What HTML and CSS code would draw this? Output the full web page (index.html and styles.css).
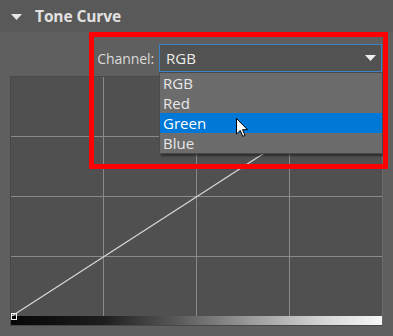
FILE: index.html
```html
<!DOCTYPE html>
<html>
<head>
<meta charset="utf-8">
<link rel="stylesheet" href="styles.css">
</head>
<body>
<div class="panel">
  <div class="header">
    <svg class="caret" width="11" height="6" viewBox="0 0 11 6"><path d="M0 0 H11 L5.5 6 Z" fill="#e6e6e6"/></svg>
    <span class="title">Tone Curve</span>
  </div>
  <div class="content">
    <div class="channel-row">
      <span class="label">Channel:</span>
      <div class="select">
        <span class="value">RGB</span>
        <svg class="arrow" width="11" height="6" viewBox="0 0 11 6"><path d="M0 0 H11 L5.5 6 Z" fill="#f0f0f0"/></svg>
      </div>
    </div>
    <div class="graph">
      <svg class="plot" width="371" height="239" viewBox="0 0 371 239">
        <g stroke="#8a8a8a" stroke-width="1">
          <line x1="92.5" y1="0" x2="92.5" y2="239"/>
          <line x1="185.5" y1="0" x2="185.5" y2="239"/>
          <line x1="278.5" y1="0" x2="278.5" y2="239"/>
          <line x1="0" y1="59.5" x2="371" y2="59.5"/>
          <line x1="0" y1="119.5" x2="371" y2="119.5"/>
          <line x1="0" y1="179.5" x2="371" y2="179.5"/>
        </g>
        <line x1="1" y1="239" x2="371" y2="0" stroke="#d8d8d8" stroke-width="1.2"/>
      </svg>
      <div class="gradient"></div>
      <div class="point"></div>
    </div>
    <ul class="dropdown">
      <li>RGB</li>
      <li>Red</li>
      <li class="active">Green</li>
      <li>Blue</li>
    </ul>
    <div class="highlight"></div>
    <svg class="cursor" width="13" height="20" viewBox="0 0 13 20"><path d="M0.5 0.5 V16 L4.3 12.5 L6.8 18.4 L9 17.4 L6.6 11.7 L11.5 11.7 Z" fill="#fff" stroke="#000" stroke-width="1" stroke-linejoin="miter"/></svg>
  </div>
</div>
</body>
</html>
```
FILE: styles.css
```css
* { box-sizing: border-box; }
html, body {
  margin: 0;
  padding: 0;
  background: #5f5f5f;
}
body {
  width: 393px;
  height: 336px;
  overflow: hidden;
  font-family: "Open Sans", "Noto Sans", sans-serif;
}
.panel {
  position: relative;
  height: 336px;
}
.header {
  height: 32px;
  background: #595959;
  display: flex;
  align-items: center;
  padding-left: 11px;
  gap: 13px;
}
.caret { display: block; margin-top: 1px; }
.title {
  color: #e2e2e2;
  font-weight: bold;
  font-size: 15.5px;
  letter-spacing: -0.1px;
}
.content {
  position: relative;
  height: 304px;
}
.channel-row {
  display: flex;
  justify-content: flex-end;
  align-items: center;
  padding-top: 12px;
  padding-right: 11px;
  gap: 5px;
}
.label {
  color: #dadada;
  font-size: 14px;
  letter-spacing: -0.1px;
}
.select {
  width: 223px;
  height: 28px;
  border: 1px solid #3d82c9;
  background: #525252;
  display: flex;
  align-items: center;
  justify-content: space-between;
  padding: 0 5px 0 6px;
}
.value {
  color: #ececec;
  font-size: 15px;
}
.arrow { display: block; }
.graph {
  position: relative;
  margin: 4px 0 0 10px;
  width: 373px;
  border: 1px solid #484848;
  border-right-color: #6a6a6a;
  background: #505050;
}
.plot { display: block; }
.gradient {
  height: 9px;
  background: linear-gradient(to right, #060606 0%, #1e1e1e 25%, #5a5a5a 45%, #9c9c9c 65%, #d8d8d8 85%, #f6f6f6 100%);
}
.point {
  position: absolute;
  left: 0;
  top: 236px;
  width: 6px;
  height: 7px;
  border: 1px solid #f0f0f0;
}
.dropdown {
  position: absolute;
  left: 159px;
  top: 40px;
  width: 224px;
  margin: 0;
  padding: 0;
  list-style: none;
  background: #6c6c6c;
  border: 1px solid #4a4a4a;
  box-shadow: 2px 2px 2px rgba(0, 0, 0, 0.45);
}
.dropdown li {
  height: 20px;
  line-height: 20px;
  padding-left: 3px;
  color: #e8e8e8;
  font-size: 15px;
}
.dropdown li.active {
  background: #0078d7;
  color: #ffffff;
}
.highlight {
  position: absolute;
  left: 89px;
  top: 0;
  width: 299px;
  height: 137px;
  border: 5px solid #ff0000;
  pointer-events: none;
}
.cursor {
  position: absolute;
  left: 236px;
  top: 86px;
}
```
